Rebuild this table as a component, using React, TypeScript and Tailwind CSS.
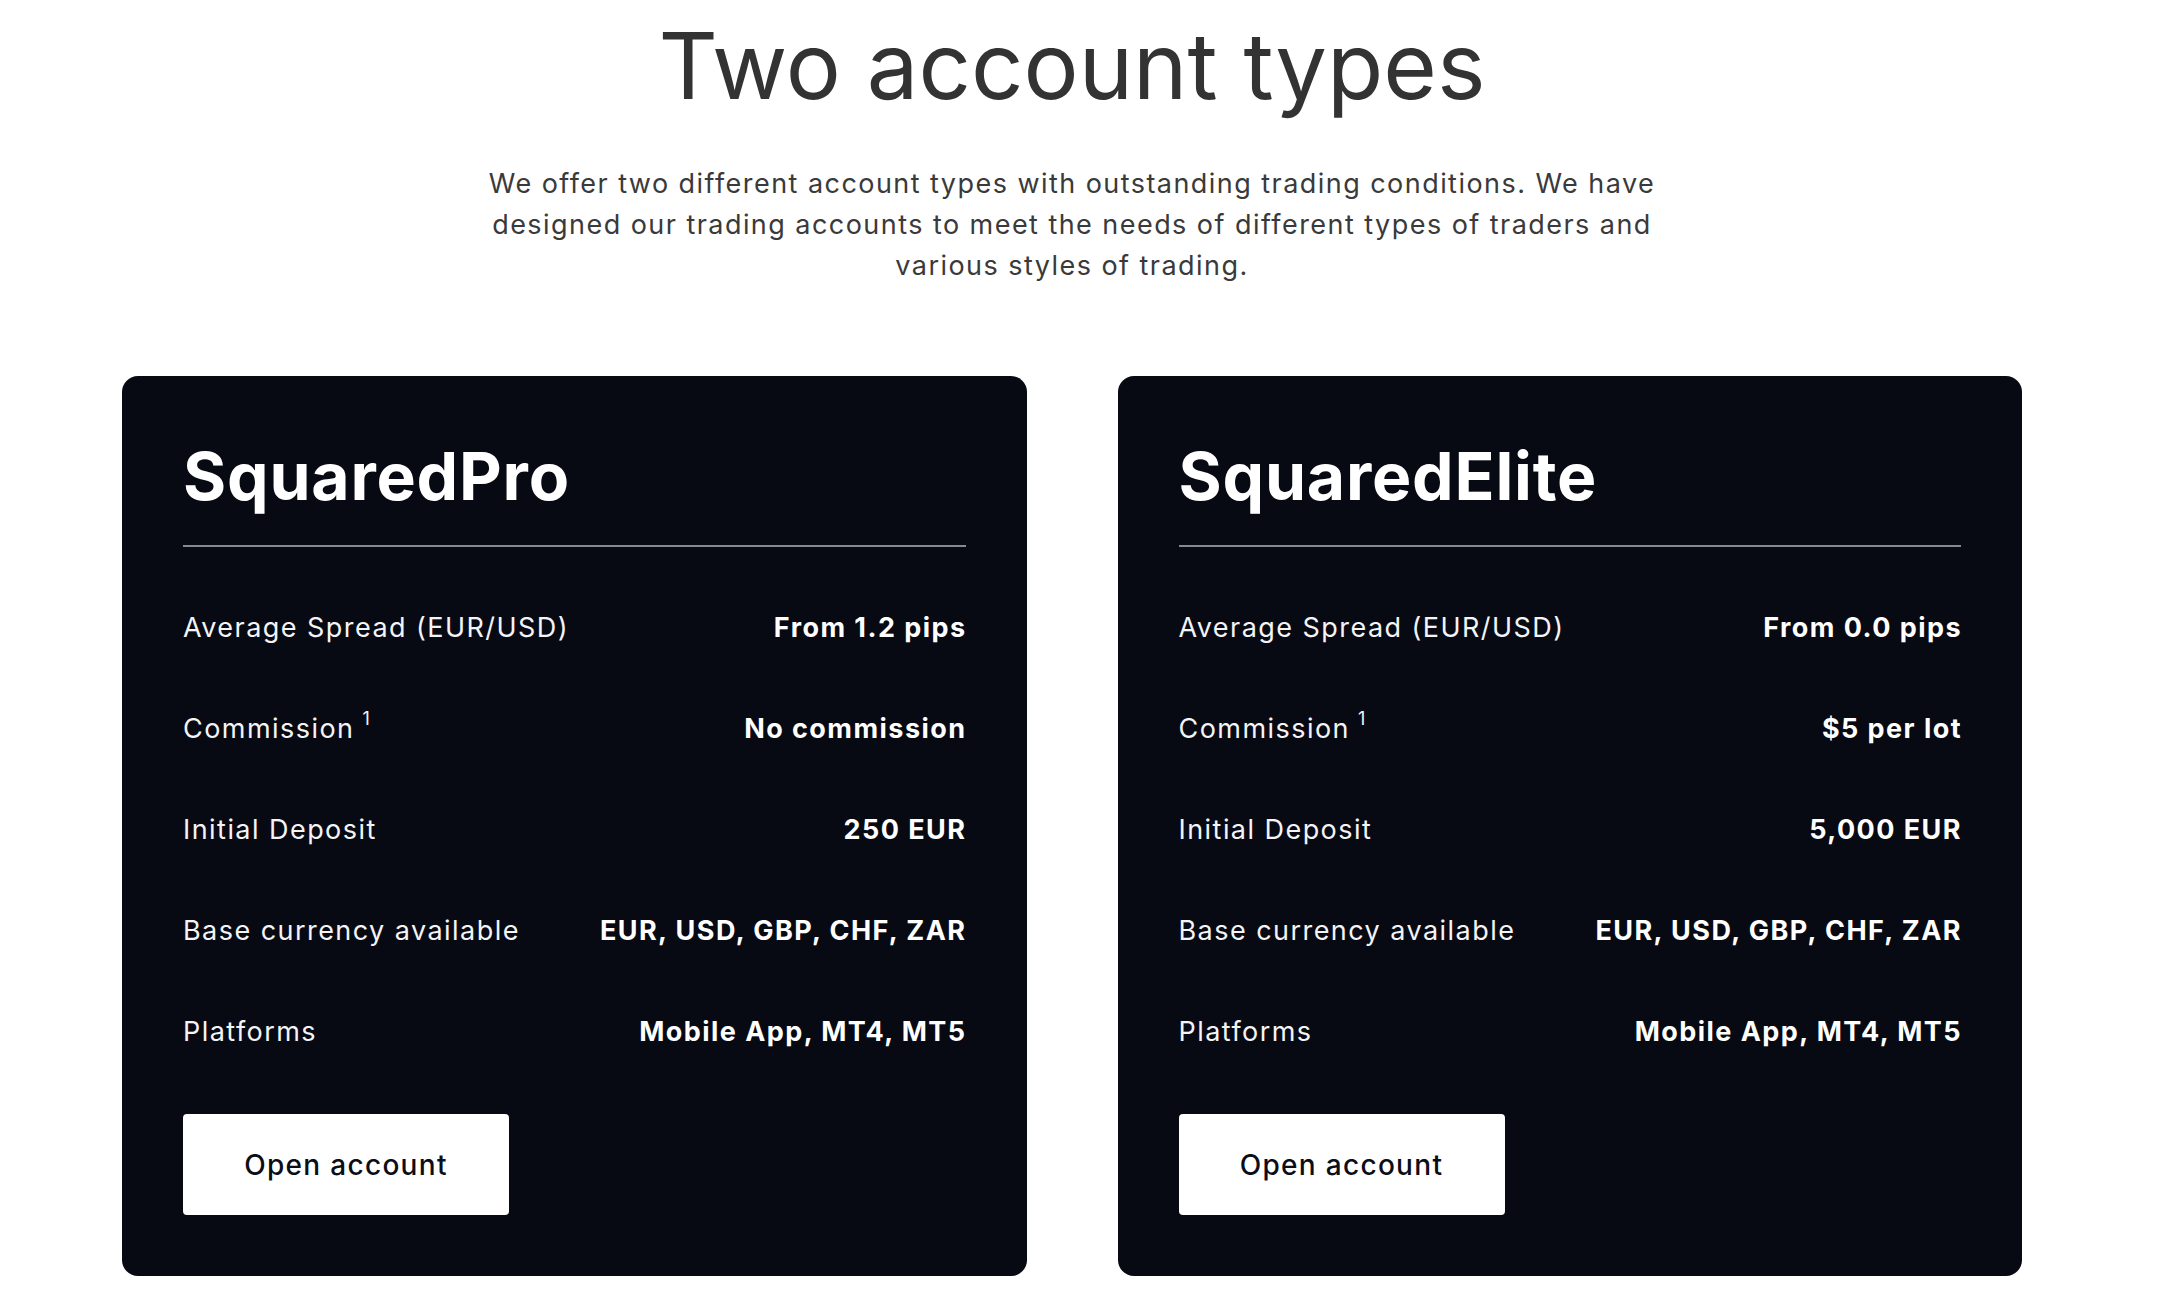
const accounts = [
  {
    name: "SquaredPro",
    rows: [
      { label: "Average Spread (EUR/USD)", value: "From 1.2 pips" },
      { label: "Commission", sup: "1", value: "No commission" },
      { label: "Initial Deposit", value: "250 EUR" },
      { label: "Base currency available", value: "EUR, USD, GBP, CHF, ZAR" },
      { label: "Platforms", value: "Mobile App, MT4, MT5" },
    ],
  },
  {
    name: "SquaredElite",
    rows: [
      { label: "Average Spread (EUR/USD)", value: "From 0.0 pips" },
      { label: "Commission", sup: "1", value: "$5 per lot" },
      { label: "Initial Deposit", value: "5,000 EUR" },
      { label: "Base currency available", value: "EUR, USD, GBP, CHF, ZAR" },
      { label: "Platforms", value: "Mobile App, MT4, MT5" },
    ],
  },
];

type Row = { label: string; value: string; sup?: string };

const AccountCard = ({ name, rows }: { name: string; rows: Row[] }) => (
  <div className="rounded-[16px] bg-[#070913] px-[61px] pt-[60px] pb-[61px] text-white">
    {/* Title */}
    <h2 className="text-[66px] font-bold leading-[80px] tracking-[0.8px]">{name}</h2>
    <div className="mt-[29px] h-[2px] bg-[#868893]" />

    {/* Conditions */}
    <div className="mt-[31px] flex flex-col tracking-[1.45px]">
      {rows.map((row) => (
        <div key={row.label} className="flex h-[101px] items-center justify-between">
          <span className="text-[27px] text-[#f4f4f6]">
            {row.label}
            {row.sup && (
              <span className="relative top-[-13px] ml-[8px] text-[18px] leading-none">{row.sup}</span>
            )}
          </span>
          <span className="mr-[-1px] text-[27px] font-bold">{row.value}</span>
        </div>
      ))}
    </div>

    {/* Action */}
    <button className="mt-[31px] flex h-[101px] w-[326px] items-center justify-center rounded-[4px] bg-white text-[28px] font-medium tracking-[1.3px] text-[#0b0d17]">
      Open account
    </button>
  </div>
);

export default function App() {
  return (
    <div className="min-h-screen bg-white font-['Inter',sans-serif]">
      <div className="ml-[122px] w-[1900px] pt-[10px] pb-[33px]">
        {/* Header */}
        <div className="text-center">
          <h1 className="text-[92px] font-normal leading-[112px] text-[#333333]">Two account types</h1>
          <p className="mx-auto mt-[41px] text-[27px] leading-[41px] tracking-[1.45px] text-[#3a3a3a]">
            We offer two different account types with outstanding trading conditions. We have
            <br />
            designed our trading accounts to meet the needs of different types of traders and
            <br />
            various styles of trading.
          </p>
        </div>

        {/* Cards */}
        <div className="mt-[90px] grid grid-cols-2 gap-[91px]">
          {accounts.map((a) => (
            <AccountCard key={a.name} name={a.name} rows={a.rows} />
          ))}
        </div>
      </div>
    </div>
  );
}
